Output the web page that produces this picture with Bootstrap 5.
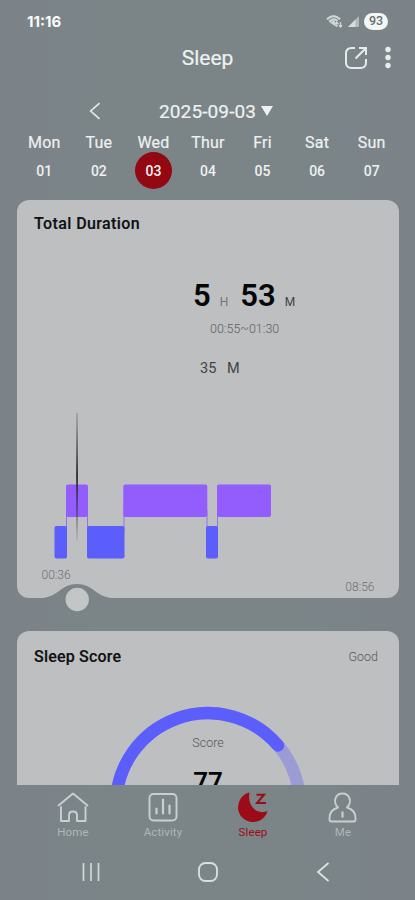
<!DOCTYPE html>
<html lang="en">
<head>
<meta charset="utf-8">
<meta name="viewport" content="width=device-width, initial-scale=1">
<title>Sleep</title>
<link href="https://cdn.jsdelivr.net/npm/bootstrap@5.3.0/dist/css/bootstrap.min.css" rel="stylesheet">
<style>
  body { background: #7b8488; font-family: Roboto, "Liberation Sans", sans-serif; color: #eef1f1; }
  .phone { width: 415px; height: 900px; background: linear-gradient(90deg, #7b8388, #7b8587 50%, #7b8388); line-height: 1; }
  svg { display: block; flex: none; }
  .status-row { height: 42px; padding: 0 26px 0 27px; font-size: 15px; }
  .clock { font-family: Inter, Roboto, sans-serif; font-weight: 700; font-size: 15px; letter-spacing: 0; color: #fafbfb; }
  .battery { width: 24px; height: 17px; background: #f4f6f6; color: #666e72; font-size: 12.5px; font-weight: 500; margin-left: 4px; margin-right: 1px; }
  .app-head { height: 32px; display: grid; grid-template-columns: 1fr auto 1fr; padding-right: 23px; }
  .app-title { font-size: 21px; padding-left: 23px; }
  .head-icons { gap: 16px; }
  .date-row { height: 30px; margin-top: 22px; padding-left: 89px; font-size: 19px; }
  .date-text { margin-left: 58px; letter-spacing: .12px; }
  .date-arrow { margin-left: 5px; }
  .week { display: grid; grid-template-columns: repeat(7, 1fr); margin: 7px 16px 0 17px; text-align: center; }
  .week-name { height: 19px; line-height: 19px; font-size: 16px; letter-spacing: .2px; }
  .week-name, .app-title, .date-text { -webkit-text-stroke: .2px currentColor; }
  .week-num { width: 37px; height: 37px; font-size: 14px; font-weight: 500; }
  .week-num.picked { background: #930812; }
  .scroller { margin-top: 11px; height: 585px; overflow: hidden; padding: 0 16px 0 17px; }
  .panel { background: #bdbfc1; border: 0; border-radius: 12px; color: #101214; }
  .panel-title { font-size: 16px; font-weight: 500; letter-spacing: .2px; color: #0e1012; -webkit-text-stroke: .15px currentColor; }
  .duration { height: 398px; padding-top: 16px; }
  .duration .panel-title { padding-left: 17px; letter-spacing: .4px; }
  .total { margin: 48px 0 0 176px; height: 36px; font-weight: 600; color: #050607; }
  .total .big { font-size: 31px; }
  .total .unit { font-size: 12px; font-weight: 400; color: #73777a; margin-left: 9px; }
  .total .minutes { margin-left: 12px; }
  .total .unit-dark { color: #404346; }
  .range { margin-top: 7px; padding-left: 193px; font-size: 12.5px; color: #5c5f62; font-weight: 300; }
  .nap { margin-top: 26px; padding-left: 183px; font-size: 14.5px; color: #404346; }
  .chart { margin-top: 36px; }
  .axis { padding: 0 24.5px; margin-top: 1px; font-size: 12px; color: #6f7174; font-weight: 300; }
  .axis span:last-child { padding-top: 12px; }
  .handle { left: 25px; bottom: -15px; }
  .score { height: 300px; margin-top: 33px; padding-top: 18px; }
  .score-head { padding: 0 21px 0 17px; }
  .rating { font-size: 12.5px; font-weight: 300; color: #55585b; }
  .ring { margin: 41px auto 0; width: 200px; }
  .ring-text { inset: 0; padding-top: 31px; text-align: center; }
  .ring-label { font-size: 12.5px; font-weight: 300; color: #55585b; }
  .ring-value { font-size: 26px; font-weight: 600; margin-top: 19px; color: #050607; }
  .tabs { height: 59px; display: grid; grid-template-columns: repeat(4, 90px); justify-content: center; margin-left: 1px; }
  .tab { color: #c9cfd0; font-size: 11.5px; padding-top: 6px; }
  .tab span { margin-top: 4px; letter-spacing: .1px; color: #afb6b8; }
  .tab.active, .tab.active span { color: #9b0c18; }
  .sysnav { height: 56px; padding: 0 85px 0 82px; }
</style>
<script src="https://cdn.jsdelivr.net/npm/bootstrap@5.3.0/dist/js/bootstrap.bundle.min.js"></script>
</head>
<body>
<div class="phone d-flex flex-column overflow-hidden">
  <div class="status-row d-flex align-items-center">
    <span class="clock">11:16</span>
    <svg class="ms-auto" width="17" height="15" viewBox="0 0 17 15" fill="none" stroke="#d0d6d6" stroke-width="2.2"><path d="M1 5.3Q7.500-1 14 5.300M3.200 7.600Q7.500 3.500 11.500 7"/><path d="M5.200 8.600L8 7.300 9 11z" fill="#d5dbdb" stroke-width="1.500"/><path d="M10.800 13V8.200m-1.800 1.800l1.800-1.800 1.800 1.800M14.500 8v5m-1.700-1.700l1.700 1.700 1.600-1.700" stroke-width="1.300"/></svg>
    <svg class="ms-1" width="13" height="13" viewBox="0 0 13 13"><path d="M1 12L12 1v11z" fill="#b3babb"/><path d="M1 12L8.500 4.500V12z" fill="#d7dcdc"/></svg>
    <span class="battery rounded-pill d-flex align-items-center justify-content-center">93</span>
  </div>

  <header class="app-head align-items-center">
    <span></span>
    <span class="app-title">Sleep</span>
    <div class="head-icons d-flex align-items-center justify-content-end">
      <svg width="24" height="24" viewBox="0 0 24 24" fill="none" stroke="#e5eaea" stroke-width="2"><path d="M11 2H7.500Q2 2 2 7.500v9q0 5.500 5.500 5.500h9q5.500 0 5.500-5.500V13"/><path d="M15 2h7v7M22 2L11.500 12.500"/></svg>
      <svg width="8" height="24" viewBox="0 0 8 24" fill="#e9eded"><circle cx="4" cy="3.500" r="2.700"/><circle cx="4" cy="11.500" r="2.700"/><circle cx="4" cy="19.500" r="2.700"/></svg>
    </div>
  </header>

  <div class="date-row d-flex align-items-center">
    <svg width="12" height="18" viewBox="0 0 12 18" fill="none" stroke="#e5eaea" stroke-width="1.600"><path d="M10.500 1.200L1.700 9l8.800 7.800"/></svg>
    <span class="date-text">2025-09-03</span>
    <svg class="date-arrow" width="12" height="10" viewBox="0 0 12 10"><path d="M0 0h12L6 10z" fill="#eef1f1"/></svg>
  </div>

  <div class="week">
    <div class="d-flex flex-column align-items-center"><div class="week-name">Mon</div><div class="week-num d-flex align-items-center justify-content-center">01</div></div>
    <div class="d-flex flex-column align-items-center"><div class="week-name">Tue</div><div class="week-num d-flex align-items-center justify-content-center">02</div></div>
    <div class="d-flex flex-column align-items-center"><div class="week-name">Wed</div><div class="week-num picked rounded-circle d-flex align-items-center justify-content-center">03</div></div>
    <div class="d-flex flex-column align-items-center"><div class="week-name">Thur</div><div class="week-num d-flex align-items-center justify-content-center">04</div></div>
    <div class="d-flex flex-column align-items-center"><div class="week-name">Fri</div><div class="week-num d-flex align-items-center justify-content-center">05</div></div>
    <div class="d-flex flex-column align-items-center"><div class="week-name">Sat</div><div class="week-num d-flex align-items-center justify-content-center">06</div></div>
    <div class="d-flex flex-column align-items-center"><div class="week-name">Sun</div><div class="week-num d-flex align-items-center justify-content-center">07</div></div>
  </div>

  <main class="scroller">
    <section class="card panel duration position-relative">
      <div class="panel-title">Total Duration</div>
      <div class="total d-flex align-items-baseline">
        <span class="big">5</span><span class="unit">H</span>
        <span class="big minutes">53</span><span class="unit unit-dark">M</span>
      </div>
      <div class="range">00:55~01:30</div>
      <div class="nap">35 &nbsp; M</div>
      <!-- sleep stages over the night, with the cursor line -->
      <svg class="chart" width="382" height="156" viewBox="17 412 382 156">
        <defs><linearGradient id="cursor" x1="0" y1="0" x2="0" y2="1"><stop offset="0" stop-color="#333" stop-opacity=".2"/><stop offset=".5" stop-color="#222"/><stop offset="1" stop-color="#333" stop-opacity=".1"/></linearGradient></defs>
        <g fill="none" stroke="#8b76ee" stroke-width="1"><path d="M66.500 510v22M87.500 510v22M124 510v22M207 510v22M217.500 510v22"/></g>
        <g fill="#935cfc"><rect x="66" y="484.500" width="22" height="32.500" rx="2"/><rect x="123.300" y="484.500" width="84" height="32.500" rx="2"/><rect x="217" y="484.500" width="54" height="32.500" rx="2"/></g>
        <g fill="#5c5efc"><rect x="54.500" y="526" width="12.500" height="32.500" rx="2"/><rect x="87" y="526" width="37.500" height="32.500" rx="2"/><rect x="206" y="526" width="12" height="32.500" rx="2"/></g>
        <rect x="76.200" y="413" width="1.700" height="127" fill="url(#cursor)"/>
      </svg>
      <div class="axis d-flex justify-content-between"><span>00:36</span><span>08:56</span></div>
      <svg class="handle position-absolute" width="70" height="30" viewBox="42 583 70 30"><path d="M42 598C58 597 61 584 77 584S96 597 112 598v1H42z" fill="#7b8487"/><circle cx="77.200" cy="599.500" r="11.700" fill="#c3c6c7"/></svg>
    </section>

    <section class="card panel score">
      <div class="score-head d-flex justify-content-between align-items-center"><span class="panel-title">Sleep Score</span><span class="rating">Good</span></div>
      <div class="ring position-relative">
        <svg width="200" height="200" viewBox="108 706 200 200" fill="none" stroke-width="12.500" stroke-linecap="round"><path d="M116 805a92 92 0 0 1 184 0" stroke="#9b9bd6"/><path d="M116 805A92 92 0 0 1 278 745.500" stroke="#5c5efc"/></svg>
        <div class="ring-text position-absolute"><div class="ring-label">Score</div><div class="ring-value">77</div></div>
      </div>
    </section>
  </main>

  <nav class="tabs">
    <div class="tab d-flex flex-column align-items-center">
      <svg width="32" height="32" viewBox="0 0 32 32" fill="none" stroke="currentColor" stroke-width="1.900" stroke-linecap="round" stroke-linejoin="round"><path d="M1.500 14.500L16 2.500l14.500 12M4 16v14h8v-6q0-3.500 4-3.500t4 3.500v6h8.500V16"/></svg>
      <span>Home</span></div>
    <div class="tab d-flex flex-column align-items-center">
      <svg width="32" height="32" viewBox="0 0 32 32" fill="none" stroke="currentColor" stroke-width="1.900"><rect x="2.500" y="3" width="27" height="26.500" rx="4"/><path d="M9.500 17.500v5M16 8.500v14M22.500 14.500v8" stroke-width="2.200" stroke-linecap="round"/></svg>
      <span>Activity</span></div>
    <div class="tab active d-flex flex-column align-items-center">
      <svg width="32" height="32" viewBox="0 0 32 32"><path d="M12.500 1.500A15 15 0 1 0 30.500 20C20 24.500 10 15 12.500 1.500z" fill="currentColor"/><path d="M19.500 3.700h7.500l-7 8.300h9" fill="none" stroke="currentColor" stroke-width="2"/></svg>
      <span>Sleep</span></div>
    <div class="tab d-flex flex-column align-items-center">
      <svg width="32" height="32" viewBox="0 0 32 32" fill="none" stroke="currentColor" stroke-width="1.900" stroke-linejoin="round"><path d="M11 16.500C5 10 9 2.500 15.500 2.500S26 10 20 16.500c5 1.500 8.500 5 8.500 10.500v1.500q0 2-2 2h-22q-2 0-2-2V27c0-5.500 3.500-9 8.500-10.500z"/><path d="M15.500 20.500v6" stroke-width="2.200"/></svg>
      <span>Me</span></div>
  </nav>

  <div class="sysnav d-flex align-items-center justify-content-between">
    <svg width="18" height="18" viewBox="0 0 18 18" stroke="#d2d8d8" stroke-width="1.700"><path d="M1.500 0v18M9 0v18M16.500 0v18"/></svg>
    <svg width="20" height="20" viewBox="0 0 20 20" fill="none" stroke="#d9dede" stroke-width="1.900"><rect x="1" y="1" width="18" height="18" rx="6.500"/></svg>
    <svg width="14" height="20" viewBox="0 0 14 20" fill="none" stroke="#dde2e2" stroke-width="1.800"><path d="M12.500 1L2 10l10.500 9"/></svg>
  </div>
</div>
</body>
</html>
